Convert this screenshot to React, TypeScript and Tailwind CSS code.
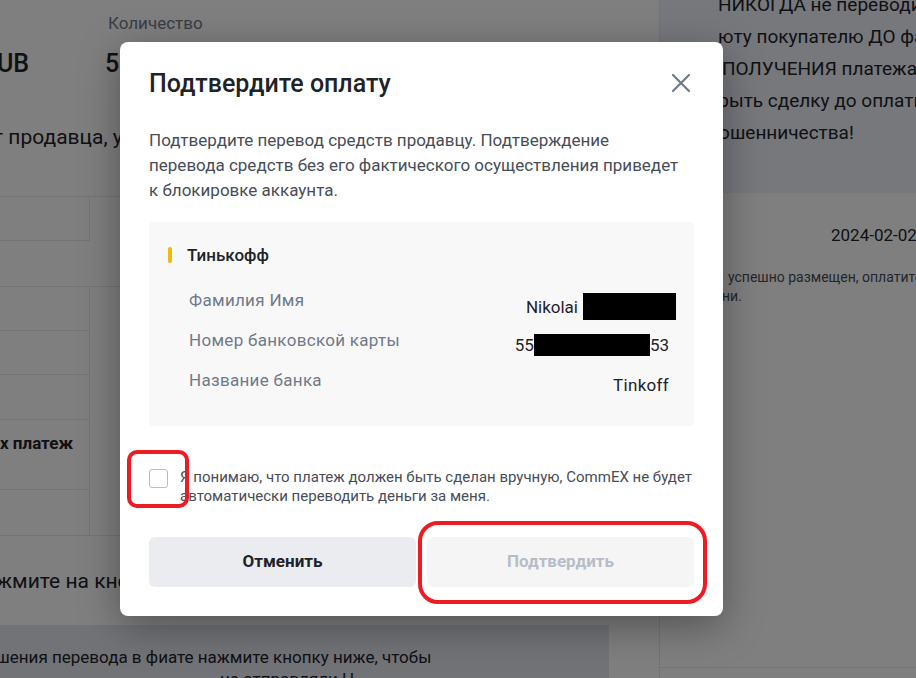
export default function App() {
  return (
    <div className="relative w-[916px] h-[678px] overflow-hidden bg-white font-['Roboto',sans-serif] text-[#1e2329]">
      {/* background page */}
      <div className="flex h-full">
        <div className="w-[660px] shrink-0 border-r border-[#e6e8ea] flex flex-col overflow-hidden">
          <div className="shrink-0 h-[100px] pt-[13px] flex flex-col">
            <div className="flex">
              <div className="w-[108px]" />
              <div className="text-[17px] leading-[20px] text-[#707a8a]">Количество</div>
            </div>
            <div className="flex mt-[15px] text-[25px] leading-[32px] font-medium">
              <div className="w-[108px] -ml-[3px]">UB</div>
              <div>5</div>
            </div>
          </div>
          <div className="shrink-0 h-[70px] pt-[23px]">
            <div className="-ml-[7px] text-[21px] leading-[28px] whitespace-nowrap">т продавца, укажите</div>
          </div>
          <div className="shrink-0 h-[27px] border-b border-[#e6e8ea]" />
          <div className="shrink-0 w-[90px] h-[44px] border-r border-b border-[#e6e8ea]" />
          <div className="shrink-0 h-[46px] border-b border-[#e6e8ea]" />
          <div className="shrink-0 w-[90px] flex flex-col border-r border-[#e6e8ea]">
            <div className="h-[44px] border-b border-[#e6e8ea]" />
            <div className="h-[44px] border-b border-[#e6e8ea]" />
            <div className="h-[45px] border-b border-[#e6e8ea]" />
            <div className="h-[70px] border-b border-[#e6e8ea] pt-[12px]">
              <div className="text-[17px] leading-[22px] font-bold whitespace-nowrap">х платеж</div>
            </div>
            <div className="h-[45px]" />
          </div>
          <div className="shrink-0 h-[90px] border-t border-[#e6e8ea] flex items-center">
            <div className="-ml-[4px] text-[21px] leading-[28px] whitespace-nowrap">жмите на кнопку</div>
          </div>
          <div className="flex-1 min-h-0 overflow-hidden w-[609px] bg-[#e4e6ee] pt-[21px]">
            <div className="-ml-[4px] text-[17px] leading-[22px] whitespace-nowrap">шения перевода в фиате нажмите кнопку ниже, чтобы</div>
            <div className="text-[17px] leading-[22px] whitespace-nowrap pl-[220px]">не отправляли Н</div>
          </div>
        </div>
        <div className="flex-1 flex flex-col">
          <div className="shrink-0 h-[204px] bg-[#eef0f8] pl-[58px] -mt-[11px] overflow-hidden text-[19px] leading-[32px] whitespace-nowrap">
            <div>НИКОГДА не переводите</div>
            <div>юту покупателю ДО фак</div>
            <div className="ml-[4px]">ПОЛУЧЕНИЯ платежа. Не</div>
            <div className="-ml-[30px]">закрыть сделку до оплаты</div>
            <div className="-ml-[13px]">мошенничества!</div>
          </div>
          <div className="shrink-0 pl-[171px] pt-[31px] text-[17px] leading-[22px] whitespace-nowrap">2024-02-02 12:00</div>
          <div className="shrink-0 pl-[68px] pt-[22px] text-[14px] leading-[19px] text-[#474d57] whitespace-nowrap">
            <div>успешно размещен, оплатите</div>
            <div className="-ml-[6px]">ни.</div>
          </div>
          <div className="flex-1" />
          <div className="shrink-0 h-[11px] border-t border-[#e6e8ea]" />
        </div>
      </div>

      {/* overlay */}
      <div className="absolute inset-0 bg-black/50" />

      {/* modal */}
      <div className="absolute left-[120px] top-[42px] w-[603px] rounded-lg bg-white px-[29px] pt-[26px] pb-[29px] shadow-[0_10px_40px_rgba(0,0,0,0.35)]">
        <div className="flex items-center justify-between h-[32px]">
          <div className="text-[25px] leading-[32px] font-medium text-[#1e2329]">Подтвердите оплату</div>
          <svg width="20" height="20" viewBox="0 0 20 20" className="mr-[3px] -mt-[3px]">
            <path d="M2 2L18 18M18 2L2 18" stroke="#707a8a" strokeWidth="2.2" strokeLinecap="round" />
          </svg>
        </div>
        <p className="mt-[27.5px] text-[17px] leading-[25px] text-[#474d57] whitespace-nowrap">
          Подтвердите перевод средств продавцу. Подтверждение
          <br />
          перевода средств без его фактического осуществления приведет
          <br />
          к блокировке аккаунта.
        </p>
        <div className="mt-[19.5px] h-[204px] rounded bg-[#f8f8f9] pt-[21px] pl-[19px] pr-[25px]">
          <div className="flex items-center h-[24px]">
            <div className="w-[4px] h-[16px] rounded-sm bg-[#f0b90b]" />
            <div className="ml-[15px] text-[17px] leading-[24px] font-medium text-[#1e2329]">Тинькофф</div>
          </div>
          <div className="mt-[21px] pl-[21px] flex flex-col gap-[11px] text-[17px] leading-[24px]">
            <div className="flex justify-between items-start h-[29px]">
              <div className="text-[#707a8a] tracking-[0.3px]">Фамилия Имя</div>
              <div className="mt-[5px] flex items-center text-[#1e2329]">
                <span>Nikolai</span>
                <span className="inline-block ml-[5px] -mr-[7px] w-[93px] h-[27px] bg-black" />
              </div>
            </div>
            <div className="flex justify-between items-start h-[29px]">
              <div className="text-[#707a8a] tracking-[0.3px]">Номер банковской карты</div>
              <div className="mt-[5px] flex items-center text-[#1e2329]">
                <span>55</span>
                <span className="inline-block w-[116px] h-[22px] bg-black" />
                <span>53</span>
              </div>
            </div>
            <div className="flex justify-between items-start h-[29px]">
              <div className="text-[#707a8a] tracking-[0.3px]">Название банка</div>
              <div className="mt-[5px] text-[#1e2329] tracking-[0.3px]">Tinkoff</div>
            </div>
          </div>
        </div>
        <div className="relative mt-[41.5px] flex items-start gap-[12px]">
          <div className="mt-[1.5px] w-[19px] h-[19px] shrink-0 rounded-[3px] border border-[#b7bdc6] bg-white" />
          <div className="text-[15px] leading-[19px] text-[#474d57]">
            Я понимаю, что платеж должен быть сделан вручную, CommEX не будет автоматически переводить деньги за меня.
          </div>
          <div className="absolute -left-[22px] -top-[17.5px] w-[62px] h-[58px] rounded-[10px] border-4 border-[#ed1c24]" />
        </div>
        <div className="relative mt-[31.5px] flex gap-[11px]">
          <button className="flex-1 h-[50px] rounded-md bg-[#eaecef] text-[17px] font-bold text-[#1e2329]">Отменить</button>
          <button className="flex-1 h-[50px] rounded-md bg-[#f5f5f5] text-[17px] font-bold text-[#b7bdc6]">Подтвердить</button>
          <div className="absolute left-[269px] -top-[16px] w-[289px] h-[83px] rounded-[20px] border-4 border-[#ed1c24]" />
        </div>
      </div>
    </div>
  );
}
